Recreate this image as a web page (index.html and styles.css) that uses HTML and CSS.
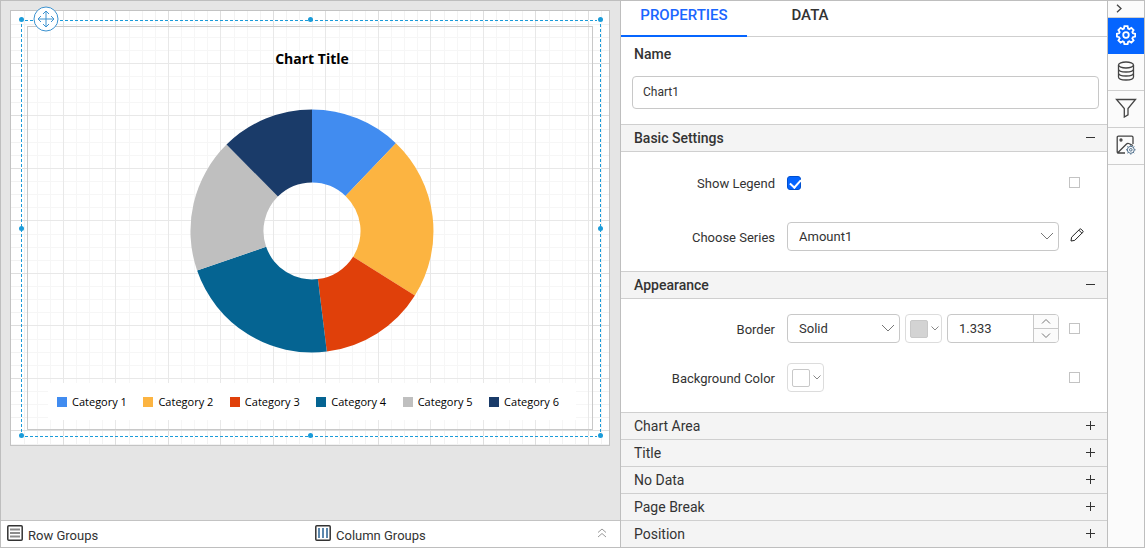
FILE: index.html
```html
<!DOCTYPE html>
<html lang="en">
<head>
<meta charset="utf-8">
<title>Report Designer</title>
<link rel="stylesheet" href="styles.css">
</head>
<body>
<div class="app">
  <main class="designer">
    <div class="surface">
      <div class="page">
        <svg class="grid" aria-hidden="true">
          <defs>
            <pattern id="grid" width="105" height="105" patternUnits="userSpaceOnUse">
              <path class="grid-minor" d="M13 0h1v105h-1zM26 0h1v105h-1zM39 0h1v105h-1zM65 0h1v105h-1zM78 0h1v105h-1zM91 0h1v105h-1zM0 13h105v1H0zM0 26h105v1H0zM0 39h105v1H0zM0 65h105v1H0zM0 78h105v1H0zM0 91h105v1H0z"/>
              <path class="grid-major" d="M52 0h1v105h-1zM104 0h1v105h-1zM0 52h105v1H0zM0 104h105v1H0z"/>
            </pattern>
          </defs>
          <rect width="100%" height="100%" fill="url(#grid)"/>
        </svg>
        <section class="chart">
          <h1 class="chart-title">Chart Title</h1>
          <svg class="donut" viewBox="-122 -122 244 244" role="img" aria-label="Doughnut chart of six categories">
            <path fill="#418cf0" d="M0-121.5A121.5 121.5 0 0 1 83.9-87.8L33.5-35.1A48.5 48.5 0 0 0 0-48.5Z"/>
            <path fill="#fcb441" d="M83.9-87.8A121.5 121.5 0 0 1 102.9 64.6L41.1 25.8A48.5 48.5 0 0 0 33.5-35.1Z"/>
            <path fill="#e0400a" d="M102.9 64.6A121.5 121.5 0 0 1 14.8 120.6L5.9 48.1A48.5 48.5 0 0 0 41.1 25.8Z"/>
            <path fill="#056492" d="M14.8 120.6A121.5 121.5 0 0 1-114.9 39.6L-45.9 15.8A48.5 48.5 0 0 0 5.9 48.1Z"/>
            <path fill="#bfbfbf" d="M-114.9 39.6A121.5 121.5 0 0 1-85.5-86.4L-34.1-34.5A48.5 48.5 0 0 0-45.9 15.8Z"/>
            <path fill="#1a3b69" d="M-85.5-86.4A121.5 121.5 0 0 1 0-121.5V-48.5A48.5 48.5 0 0 0-34.1-34.5Z"/>
          </svg>
          <ul class="legend">
            <li class="legend-item"><span class="key key-1"></span>Category 1</li>
            <li class="legend-item"><span class="key key-2"></span>Category 2</li>
            <li class="legend-item"><span class="key key-3"></span>Category 3</li>
            <li class="legend-item"><span class="key key-4"></span>Category 4</li>
            <li class="legend-item"><span class="key key-5"></span>Category 5</li>
            <li class="legend-item"><span class="key key-6"></span>Category 6</li>
          </ul>
        </section>
        <div class="selection">
          <span class="edge edge-top"></span><span class="edge edge-bottom"></span>
          <span class="edge edge-left"></span><span class="edge edge-right"></span>
          <span class="handle top left"></span><span class="handle top center"></span><span class="handle top right"></span>
          <span class="handle middle left"></span><span class="handle middle right"></span>
          <span class="handle bottom left"></span><span class="handle bottom center"></span><span class="handle bottom right"></span>
          <button class="move" type="button" aria-label="Move">
            <svg width="26" height="26" viewBox="0 0 26 26"><circle cx="13" cy="13" r="12" fill="#fff"/><path d="M13 5v16M5 13h16M10 8l3-3 3 3M10 18l3 3 3-3M8 10l-3 3 3 3M18 10l3 3-3 3"/></svg>
          </button>
        </div>
      </div>
    </div>
    <footer class="groups">
      <div class="group">
        <svg width="16" height="16" viewBox="0 0 16 16"><rect class="frame" x=".8" y=".8" width="14.4" height="14.4" rx="1"/><path class="bars-row" d="M3 4.5h10M3 8h10M3 11.5h10"/></svg>
        <span>Row Groups</span>
      </div>
      <div class="group">
        <svg width="16" height="16" viewBox="0 0 16 16"><rect class="frame" x=".8" y=".8" width="14.4" height="14.4" rx="1"/><path class="bars-col" d="M4 3v10M8 3v10M12 3v10"/></svg>
        <span>Column Groups</span>
      </div>
      <button class="expand" type="button" aria-label="Expand groups">
        <svg width="10" height="10" viewBox="0 0 10 10"><path d="M1 4.5l4-3.5 4 3.5M1 9l4-3.5L9 9"/></svg>
      </button>
    </footer>
  </main>

  <aside class="panel">
    <nav class="tabs">
      <button class="tab active" type="button">PROPERTIES</button>
      <button class="tab" type="button">DATA</button>
    </nav>
    <div class="name-field">
      <label class="name-label" for="name">Name</label>
      <input class="box name-input" id="name" type="text" value="Chart1">
    </div>

    <button class="head open" type="button"><span>Basic Settings</span><svg class="sign" width="9" height="9" viewBox="0 0 9 9"><path d="M0 4.5h9"/></svg></button>
    <div class="settings basic">
      <div class="row">
        <label class="label" for="legend">Show Legend</label>
        <div class="controls"><input class="check" id="legend" type="checkbox" checked></div>
        <button class="marker" type="button" aria-label="Legend expression"></button>
      </div>
      <div class="row">
        <label class="label" for="series">Choose Series</label>
        <div class="controls">
          <div class="select"><select class="box" id="series"><option>Amount1</option></select><svg class="caret" width="14" height="8" viewBox="0 0 14 8"><path d="M1 1l6 6 6-6"/></svg></div>
        </div>
        <button class="edit" type="button" aria-label="Edit series">
          <svg width="14" height="14" viewBox="0 0 14 14"><path d="M1 13l.6-3.800 8.200-8.100q.6-.5 1.200 0l1.900 1.900q.5.6 0 1.200l-8.200 8.200zM8.800 2.100l3.100 3.100"/></svg>
        </button>
      </div>
    </div>

    <button class="head open" type="button"><span>Appearance</span><svg class="sign" width="9" height="9" viewBox="0 0 9 9"><path d="M0 4.5h9"/></svg></button>
    <div class="settings appearance">
      <div class="row">
        <label class="label" for="border">Border</label>
        <div class="controls">
          <div class="select"><select class="box" id="border"><option>Solid</option></select><svg class="caret" width="14" height="8" viewBox="0 0 14 8"><path d="M1 1l6 6 6-6"/></svg></div>
          <button class="color" type="button" aria-label="Border color"><span class="swatch gray"></span><svg width="8" height="5" viewBox="0 0 8 5"><path d="M.5.5L4 4 7.500.5"/></svg></button>
          <div class="box number">
            <input class="number-input" type="text" inputmode="decimal" value="1.333" aria-label="Border width">
            <div class="spin">
              <button type="button" aria-label="Increase"><svg width="10" height="5" viewBox="0 0 10 5"><path d="M1 4.500L5 .5l4 4"/></svg></button>
              <button type="button" aria-label="Decrease"><svg width="10" height="5" viewBox="0 0 10 5"><path d="M1 .5l4 4 4-4"/></svg></button>
            </div>
          </div>
        </div>
        <button class="marker" type="button" aria-label="Border expression"></button>
      </div>
      <div class="row">
        <label class="label" for="background">Background Color</label>
        <div class="controls">
          <button class="color" id="background" type="button"><span class="swatch"></span><svg width="8" height="5" viewBox="0 0 8 5"><path d="M.5.5L4 4 7.500.5"/></svg></button>
        </div>
        <button class="marker" type="button" aria-label="Background expression"></button>
      </div>
    </div>

    <button class="head" type="button"><span>Chart Area</span><svg class="sign" width="9" height="9" viewBox="0 0 9 9"><path d="M0 4.5h9M4.500 0v9"/></svg></button>
    <button class="head" type="button"><span>Title</span><svg class="sign" width="9" height="9" viewBox="0 0 9 9"><path d="M0 4.5h9M4.500 0v9"/></svg></button>
    <button class="head" type="button"><span>No Data</span><svg class="sign" width="9" height="9" viewBox="0 0 9 9"><path d="M0 4.5h9M4.500 0v9"/></svg></button>
    <button class="head" type="button"><span>Page Break</span><svg class="sign" width="9" height="9" viewBox="0 0 9 9"><path d="M0 4.5h9M4.500 0v9"/></svg></button>
    <button class="head" type="button"><span>Position</span><svg class="sign" width="9" height="9" viewBox="0 0 9 9"><path d="M0 4.5h9M4.500 0v9"/></svg></button>
  </aside>

  <nav class="rail">
    <button class="rail-button collapse" type="button" aria-label="Collapse panel"><svg width="6" height="9" viewBox="0 0 6 9"><path d="M1 .7l4 3.800-4 3.800"/></svg></button>
    <button class="rail-button current" type="button" aria-label="Properties">
      <svg width="20" height="20" viewBox="0 0 20 20"><path d="M8.4 1.200h3.200l.5 2.300 1.300.6 2-1.300 2.200 2.200-1.300 2 .6 1.300 2.300.5v2.800l-2.300.6-.6 1.300 1.300 2-2.200 2.200-2-1.300-1.300.6-.5 2.200H8.400l-.5-2.200-1.300-.6-2 1.300-2.200-2.200 1.300-2-.6-1.300-2.200-.6V8.800l2.200-.5.6-1.300-1.300-2 2.200-2.200 2 1.300 1.300-.6z"/><circle cx="10" cy="10" r="2.800"/></svg>
    </button>
    <button class="rail-button" type="button" aria-label="Data">
      <svg width="18" height="20" viewBox="0 0 18 20"><ellipse cx="9" cy="4" rx="7.500" ry="3"/><path d="M1.500 4v12c0 4 15 4 15 0V4M1.500 8c0 4 15 4 15 0M1.500 12c0 4 15 4 15 0"/></svg>
    </button>
    <button class="rail-button" type="button" aria-label="Filters">
      <svg width="22" height="20" viewBox="0 0 22 20"><path d="M1.500 1.500h19L13 10.500v6.300L9.300 19v-8.500z"/></svg>
    </button>
    <button class="rail-button" type="button" aria-label="Image settings">
      <svg width="20" height="20" viewBox="0 0 20 20"><path d="M9 18H2.500Q1.200 18 1.200 16.700V2.500Q1.200 1.200 2.500 1.200h13.200Q17 1.200 17 2.500V9M2 17.500l8.500-8.500q1-1 2.200-.5L17 10.500"/><circle cx="5" cy="5" r="1"/><g class="cog"><circle cx="14.800" cy="14.800" r="3.500"/><circle cx="14.800" cy="14.800" r="1.300"/><path d="M14.800 10v1.300M14.800 18.300v1.300M10 14.800h1.300M18.300 14.800h1.300M11.400 11.400l.9.900M17.300 17.300l.9.900M11.400 18.200l.9-.9M17.300 12.300l.9-.9"/></g></svg>
    </button>
  </nav>
</div>
</body>
</html>
```
FILE: styles.css
```css
* {
  box-sizing: border-box;
}

body {
  margin: 0;
  font-family: Roboto, "Liberation Sans", sans-serif;
  font-size: 13px;
  color: #333;
}

button,
input,
select {
  margin: 0;
  padding: 0;
  border: 0;
  background: none;
  color: inherit;
  font: inherit;
}

svg {
  display: block;
  flex: none;
  fill: none;
  stroke: #444;
}

.app {
  display: flex;
  height: 100vh;
  border: 1px solid #bebebe;
  background: #fff;
}

/* Design surface */
.designer {
  flex: 1;
  display: flex;
  flex-direction: column;
  min-width: 0;
}

.surface {
  flex: 1;
  min-height: 0;
  padding: 9px 10px 9px 9px;
  background: #e5e5e5;
}

.page {
  position: relative;
  padding: 15px 16px;
  border: 1px solid #c3c3c3;
  background: #fff;
}

.grid {
  position: absolute;
  inset: 0;
  width: 100%;
  height: 100%;
  stroke: none;
}

.grid-minor {
  fill: #f2f2f2;
}

.grid-major {
  fill: #dedede;
}

.chart {
  position: relative;
  display: flex;
  flex-direction: column;
  align-items: center;
  padding: 22px 16px 9px 20px;
  border: 1px solid #c8c8c8;
  background: rgba(255, 255, 255, 0.3);
}

.chart-title {
  margin: 0 0 40px;
  font: bold 14px/20px "Open Sans", "Noto Sans", sans-serif;
  color: #000;
}

.donut {
  width: 244px;
  height: 244px;
  margin-bottom: 30px;
  stroke: none;
}

.legend {
  display: flex;
  justify-content: space-between;
  align-self: stretch;
  margin: 0;
  padding: 9px 17px 9px 9px;
  background: #fff;
  list-style: none;
  font: 11px/19px "Open Sans", "Noto Sans", sans-serif;
  color: #000;
}

.legend-item {
  display: flex;
  align-items: center;
  gap: 5px;
  white-space: nowrap;
}

.key {
  width: 10px;
  height: 10px;
}

.key-1 { background: #418cf0; }
.key-2 { background: #fcb441; }
.key-3 { background: #e0400a; }
.key-4 { background: #056492; }
.key-5 { background: #bfbfbf; }
.key-6 { background: #1a3b69; }

/* Selection frame over the chart */
.selection {
  position: absolute;
  inset: 9px 8px 8px 10px;
}

.edge {
  position: absolute;
}

.edge-top,
.edge-bottom {
  left: 4px;
  right: 4px;
  height: 1px;
  background: repeating-linear-gradient(90deg, #1a9bd9 0 3px, #fff 3px 5px);
}

.edge-left,
.edge-right {
  top: 4px;
  bottom: 4px;
  width: 1px;
  background: repeating-linear-gradient(#1a9bd9 0 3px, #fff 3px 5px);
}

.edge-top { top: 0; }
.edge-bottom { bottom: 0; }
.edge-left { left: 0; }
.edge-right { right: 0; }

.handle {
  position: absolute;
  width: 5px;
  height: 5px;
  border-radius: 50%;
  background: #1a9bd9;
}

.top { top: -3px; }
.middle { top: calc(50% - 3px); }
.bottom { bottom: -1px; }
.left { left: -2px; }
.center { left: calc(50% - 3px); }
.right { right: -2px; }

.move {
  position: absolute;
  top: -14px;
  left: 12px;
}

.move svg {
  stroke: #3c92d0;
}

/* Row and column groups */
.groups {
  position: relative;
  display: grid;
  grid-template-columns: 1fr 1fr;
  height: 27px;
  padding-left: 6px;
  column-gap: 3px;
  border-top: 1px solid #c3c3c3;
  background: #fff;
}

.group {
  display: flex;
  align-items: center;
  gap: 5px;
}

.group svg {
  align-self: flex-start;
  margin-top: 4px;
}

.group span {
  padding-top: 3px;
}

.frame {
  stroke: #333;
  stroke-width: 1.500;
}

.bars-row {
  stroke: #8b8b8b;
  stroke-width: 2;
}

.bars-col {
  stroke: #5c87ad;
  stroke-width: 2;
}

.expand {
  position: absolute;
  top: 7px;
  right: 13px;
}

.expand svg {
  stroke: #999;
}

/* Properties panel */
.panel {
  flex: none;
  display: flex;
  flex-direction: column;
  width: 487px;
  border-left: 1px solid #bebebe;
  overflow: hidden;
}

.tabs {
  flex: none;
  display: flex;
  height: 36px;
  border-bottom: 1px solid #cfcfcf;
}

.tab {
  width: 126px;
  height: 36px;
  padding-bottom: 8px;
  font-size: 15px;
  font-weight: 500;
}

.tab.active {
  border-bottom: 2px solid #0565ff;
  padding-bottom: 6px;
  color: #1a66ff;
}

.name-field {
  display: flex;
  flex-direction: column;
  gap: 14px;
  padding: 9px 8px 15px 11px;
}

.name-label {
  padding-left: 2px;
  font-size: 14px;
  font-weight: 500;
  line-height: 16px;
}

.box {
  border: 1px solid #c8c8c8;
  border-radius: 4px;
  background: #fff;
}

.name-input {
  width: 100%;
  height: 33px;
  padding: 0 10px 2px;
  font-size: 12px;
}

.head {
  flex: none;
  display: flex;
  align-items: center;
  justify-content: space-between;
  height: 27px;
  padding: 0 12px 0 13px;
  border-top: 1px solid #cfcfcf;
  background: #f4f4f4;
  font-size: 14px;
  text-align: left;
}

.head.open {
  height: 28px;
  border-bottom: 1px solid #cfcfcf;
  font-weight: 500;
}

.sign {
  margin-bottom: 2px;
  stroke: #333;
}

.settings {
  display: flex;
  flex-direction: column;
}

.basic {
  gap: 25px;
  padding: 16px 0 20px;
}

.appearance {
  gap: 20px;
  padding: 15px 0 20px;
}

.row {
  display: grid;
  grid-template-columns: 154px 1fr 36px;
  column-gap: 12px;
  align-items: center;
  height: 29px;
}

.row > :last-child {
  justify-self: start;
}

.label {
  padding-top: 2px;
  text-align: right;
}

.controls {
  display: flex;
  gap: 5px;
}

.check {
  appearance: none;
  width: 14px;
  height: 14px;
  border: 1px solid #0050d0;
  border-radius: 3px;
  background: #0565ff;
  position: relative;
}

.check:checked::after {
  content: "";
  position: absolute;
  top: 0;
  left: 4px;
  width: 5px;
  height: 9px;
  border: solid #fff;
  border-width: 0 2px 2px 0;
  transform: rotate(42deg);
}

.select {
  position: relative;
  flex: 1;
}

.select select {
  appearance: none;
  display: block;
  width: 100%;
  height: 29px;
  padding-left: 11px;
}

.caret {
  position: absolute;
  top: 10px;
  right: 5px;
  stroke: #777;
  pointer-events: none;
}

.color {
  display: flex;
  align-items: center;
  gap: 3px;
  width: 37px;
  height: 29px;
  padding-left: 4px;
  border: 1px solid #dcdcdc;
  border-radius: 4px;
}

.color svg {
  stroke: #888;
}

.swatch {
  width: 18px;
  height: 18px;
  border: 1px solid #c8c8c8;
  border-radius: 2px;
}

.swatch.gray {
  background: #d3d3d3;
}

.number {
  display: flex;
  width: 112px;
  height: 29px;
  overflow: hidden;
}

.number-input {
  flex: 1;
  min-width: 0;
  padding-left: 11px;
}

.spin {
  display: grid;
  width: 25px;
  border-left: 1px solid #c8c8c8;
  background: #fbfbfb;
}

.spin button {
  display: grid;
  place-items: center;
}

.spin button + button {
  border-top: 1px solid #c8c8c8;
}

.spin svg {
  stroke: #777;
}

.marker {
  width: 11px;
  height: 11px;
  margin-left: -2px;
  border: 1px solid #c3c3c3;
}

.edit {
  margin-left: -1px;
}

.edit svg {
  margin-bottom: 3px;
  stroke: #222;
}

/* Icon rail */
.rail {
  flex: none;
  display: flex;
  flex-direction: column;
  width: 37px;
  border-left: 1px solid #bebebe;
  background: #fbfbfb;
}

.rail-button {
  display: grid;
  place-items: center;
  height: 37px;
  padding-bottom: 2px;
  border-bottom: 1px solid #cfcfcf;
}

.rail-button svg {
  stroke-width: 1.300;
}

.collapse {
  height: 17px;
  padding-right: 15px;
}

.current {
  height: 36px;
  border-bottom: 0;
  background: #0565ff;
}

.current svg {
  stroke: #fff;
  stroke-width: 1.800;
}

.cog {
  stroke: #4f6f8c;
  stroke-width: 1;
}
```
